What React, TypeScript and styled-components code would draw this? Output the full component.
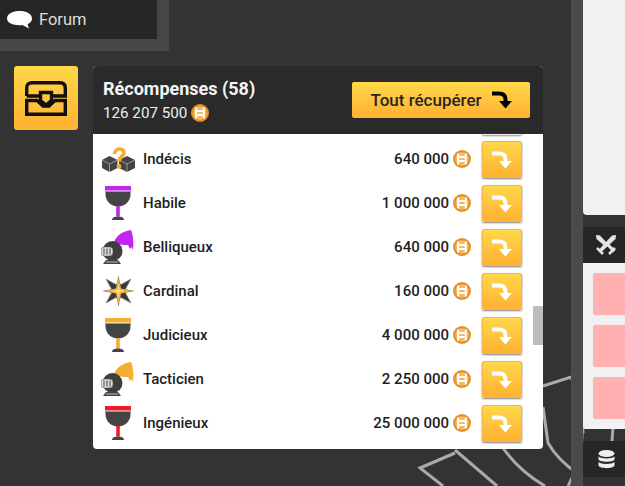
import React from "react";
import styled, { createGlobalStyle } from "styled-components";

const Global = createGlobalStyle`
  html, body { margin: 0; padding: 0; width: 625px; height: 486px; overflow: hidden; background: #333; }
  * { box-sizing: border-box; }
  body { font-family: Roboto, "Liberation Sans", sans-serif; }
`;
const Page = styled.div`
  position: relative; width: 625px; height: 486px; overflow: hidden; background: #333;
  display: grid; grid-template-columns: 571px 12px 42px;
`;
const Decor = styled.svg`position: absolute; left: 0; top: 0; pointer-events: none; z-index: 0;`;
const Main = styled.div`position: relative; z-index: 1; display: flex; flex-direction: column; align-items: flex-start;`;
const ForumFrame = styled.div`
  width: 169px; height: 51px; background: #464646; padding: 0 12px 12px 0;
`;
const Forum = styled.div`
  width: 157px; height: 39px; background: #262626; display: flex; align-items: center;
  padding: 0 0 0 7px; gap: 7px; color: #dedede; font-size: 16.5px;
`;
const Row0 = styled.div`display: flex; align-items: flex-start; margin: 15px 0 0 14px; gap: 15px;`;
const Chest = styled.div`
  width: 64px; height: 64px; border-radius: 3px; background: linear-gradient(#ffd84a, #ffb132);
  display: flex; align-items: center; justify-content: center;
`;
const Panel = styled.div`
  position: relative; width: 450px; height: 383px; border-radius: 4px; overflow: hidden;
  display: flex; flex-direction: column; background: #fff;
`;
const Head = styled.div`
  height: 68px; flex: none; background: #2a2a2a; display: flex; align-items: center;
  justify-content: space-between; padding: 0 13px 0 10px; color: #fff;
`;
const Title = styled.div`font-size: 18px; font-weight: 700; line-height: 22px; color: #f4f4f4; margin-top: 1px;`;
const Sum = styled.div`display: flex; align-items: center; gap: 4px; font-size: 15.2px; line-height: 20px; color: #eee; margin-top: 3px;`;
const AllBtn = styled.button`
  width: 178px; height: 36px; border: 0; border-radius: 2px; background: linear-gradient(#ffd84a, #ffb132);
  color: #262626; font: 500 17px Roboto, sans-serif; display: flex; align-items: center; justify-content: center;
  gap: 10px; padding: 0; margin-top: -1px;
`;
const List = styled.div`flex: 1; overflow: hidden; position: relative; padding-top: 7px;`;
const Stub = styled.div`
  position: absolute; left: 389px; top: -37px; width: 40px; height: 38px; background: #f2f2f2;
  border-radius: 2px; box-shadow: 0 1px 2px rgba(0,0,0,.45);
`;
const Item = styled.div`
  height: 44px; display: flex; align-items: center; padding: 0 21px 8px 8px;
`;
const IconBox = styled.div`width: 34px; height: 36px; display: flex; align-items: center; justify-content: center; flex: none;`;
const Name = styled.div`margin-left: 8px; font-size: 15px; font-weight: 500; color: #1e1e1e; flex: 1;`;
const Amount = styled.div`font-size: 15px; font-weight: 500; color: #1e1e1e; margin-right: 4px;`;
const Claim = styled.button`
  width: 40px; height: 37px; margin-left: 11px; border: 1px solid #f5b548; border-radius: 2px; padding: 0;
  align-self: flex-start;
  background: linear-gradient(#ffd84a, #ffb132); box-shadow: 0 1px 2px rgba(0,0,0,.5);
  display: flex; align-items: center; justify-content: center;
`;
const Thumb = styled.div`position: absolute; left: 440px; top: 240px; width: 10px; height: 39px; background: #bdbdbd;`;
const Gutter = styled.div`position: relative; z-index: 0; background: #4a4a4a;`;
const Side = styled.div`position: relative; z-index: 1; display: flex; flex-direction: column; width: 42px;`;
const TopCard = styled.div`height: 215px; background: #f1f1f1; border-bottom-left-radius: 4px;`;
const SideHead = styled.div`
  margin-top: 12px; height: 36px; background: #262626; border-top-left-radius: 4px;
  display: flex; align-items: center; padding-left: 13px;
`;
const SideBody = styled.div`
  height: 166px; background: #f1f1f1; padding: 10px 0 0 10px; display: flex; flex-direction: column; gap: 10px;
  border-bottom-left-radius: 2px;
`;
const Pink = styled.div`height: 42px; background: #ffb0b0; border-radius: 2px 0 0 2px;`;
const DbBox = styled.div`
  margin-top: 12px; height: 36px; background: #262626; border-top-left-radius: 4px; padding: 9px 0 0 15px;
`;

const Coin = () => (
  <svg width="18" height="18" viewBox="0 0 18 18" style={{ flex: "none" }}>
    <circle cx="9" cy="9" r="9" fill="#e2902a" />
    <circle cx="9" cy="9" r="6.800" fill="#f5b85e" />
    <path d="M5.200 3.500v11M12.800 3.500v11M5.200 7h7.600M5.200 11h7.600" stroke="#fff" strokeWidth="2" fill="none" />
  </svg>
);
const Arrow = ({ color }: { color: string }) => (
  <svg width="20" height="18" viewBox="0 0 20 18">
    <path d="M0 2.500h7c4 0 6.500 2 6.500 6v3" stroke={color} strokeWidth="4" fill="none" />
    <path d="M7 10h13l-6.500 7.500z" fill={color} />
  </svg>
);
const Goblet = ({ c }: { c: string }) => (
  <svg width="26" height="34" viewBox="0 0 26 34">
    <rect x="0" y="0" width="26" height="4.500" fill={c} />
    <path d="M0 5.500h26" stroke="#999" strokeWidth="1" />
    <path d="M.5 6h25v2.500C25.500 15 20 20.500 13 20.500S.5 15 .5 8.500z" fill="#444" />
    <rect x="11.200" y="20" width="3.600" height="10.500" fill={c} />
    <path d="M7 34c0-2.500 2.500-3.500 6-3.500s6 1 6 3.500z" fill="#444" />
  </svg>
);
const Helmet = ({ c }: { c: string }) => (
  <svg width="33" height="35" viewBox="0 0 33 35" style={{ marginLeft: -1 }}>
    <path d="M13 12C16 4 23 1 30 0c2 5 3 12 2 20l-1.500-3-1.500 2-2-4c-5 0-10-.5-14-3z" fill={c} />
    <circle cx="11.500" cy="21" r="10" fill="#3e3e3e" />
    <rect x="0" y="17" width="12" height="9" rx="3.500" fill="#ddd" stroke="#555" strokeWidth=".6" />
    <path d="M3 18.500v6M6 18.500v6M9 18.500v6" stroke="#444" strokeWidth="1" />
    <path d="M2 34l3-4h12l3 4z" fill="#444" />
    <path d="M5 32h12" stroke="#bbb" strokeWidth="1" />
  </svg>
);
const Star = () => (
  <svg width="33" height="32" viewBox="0 0 33 32">
    <path d="M4 4l10 5.500 2.500-2 2.500 2L29 4l-5.500 10 2 2-2 2L29 28l-10-5.500-2.500 2-2.500-2L4 28l5.500-10-2-2 2-2z" fill="#3a3a3a" stroke="#888" strokeWidth=".7" />
    <path d="M16.500 0l2.500 13.500L33 16l-14 2.500L16.500 32 14 18.500 0 16l14-2.500z" fill="#777" />
    <path d="M16.500 3l2.500 10.500L30 16l-11 2.500L16.500 29 14 18.500 3 16l11-2.500z" fill="#f6ad33" />
    <path d="M16.500 8l1 7 6 1-6 1-1 7-1-7-6-1 6-1z" fill="#fbe09a" />
  </svg>
);
const Dice = () => (
  <svg width="34" height="25" viewBox="0 0 34 25">
    <path d="M1 13l7.500-4 8 4v8l-8 4-7.500-4z" fill="#444" />
    <path d="M1 13l7.500 4 8-4M8.500 17v8" stroke="#bbb" strokeWidth=".7" fill="none" />
    <path d="M18 13l8-4 8 4v8l-8 4-8-4z" fill="#444" />
    <path d="M18 13l8 4 8-4M26 17v8" stroke="#bbb" strokeWidth=".7" fill="none" />
    <path d="M13.500 7c0-6 9.500-6.500 9.500-1.500 0 4-5 4-5 9" stroke="#f6ad33" strokeWidth="3.800" fill="none" />
    <rect x="15.800" y="17" width="4.400" height="4.400" rx="1.500" fill="#f6ad33" />
  </svg>
);

const rows: [string, string, React.ReactNode][] = [
  ["Indécis", "640 000", <Dice />],
  ["Habile", "1 000 000", <Goblet c="#c026f0" />],
  ["Belliqueux", "640 000", <Helmet c="#c026f0" />],
  ["Cardinal", "160 000", <Star />],
  ["Judicieux", "4 000 000", <Goblet c="#f6ad33" />],
  ["Tacticien", "2 250 000", <Helmet c="#f6ad33" />],
  ["Ingénieux", "25 000 000", <Goblet c="#f01c28" />],
];

export default function App() {
  return (
    <>
      <Global />
      <Page>
        <Decor width="625" height="486" viewBox="0 0 625 486" fill="none" stroke="#aaa" strokeWidth="3">
          <path d="M543 386l28-9c8 18 12 36 12 56" />
          <path d="M575 394h8" />
          <path d="M576 394c10 28 8 64-8 92" />
          <path d="M543 407l5 36c7 12 17 22 29 30" />
          <path d="M503 448c10 14 25 28 42 38" />
          <path d="M455 453l-35 15 23 18" />
          <path d="M455 450l42 36" />
          <path d="M613 428l-1 13" />
        </Decor>
        <Main>
          <ForumFrame>
            <Forum>
              <svg width="25" height="18" viewBox="0 0 25 18">
                <path d="M12.500 0C19 0 25 2.500 25 7.500c0 2.800-2 4.700-4.500 5.700l1.500 4.300-6.500-3.500C8 14.800 0 12.800 0 7.500 0 2.500 6 0 12.500 0z" fill="#fff" />
              </svg>
              Forum
            </Forum>
          </ForumFrame>
          <Row0>
            <Chest>
              <svg width="42" height="35" viewBox="0 0 42 35" fill="none" stroke="#111" strokeWidth="3.400">
                <path d="M1.700 15V7c0-3.500 2-5.300 5.300-5.300h28c3.500 0 5.300 1.800 5.300 5.300v8H27M15 15H1.700" />
                <path d="M1.700 19.500v13.800h38.600V19.500H30l-6 5.500h-6l-6-5.500z" />
                <path d="M15.500 11.500h11v8L21 24l-5.500-4.500z" />
              </svg>
            </Chest>
            <Panel>
              <Head>
                <div>
                  <Title>Récompenses (58)</Title>
                  <Sum>126 207 500 <Coin /></Sum>
                </div>
                <AllBtn>Tout récupérer <Arrow color="#000" /></AllBtn>
              </Head>
              <List>
                <Stub />
                {rows.map(([n, a, i]) => (
                  <Item key={n}>
                    <IconBox>{i}</IconBox>
                    <Name>{n}</Name>
                    <Amount>{a}</Amount>
                    <Coin />
                    <Claim><Arrow color="#fff" /></Claim>
                  </Item>
                ))}
              </List>
              <Thumb />
            </Panel>
          </Row0>
        </Main>
        <Gutter />
        <Side>
          <TopCard />
          <SideHead>
            <svg width="20" height="20" viewBox="0 0 20 20" fill="#e4e4e4" stroke="#e4e4e4">
              <path d="M0 0l4 .5 6.500 7-2.500 3-7.500-6.500z" stroke="none" />
              <path d="M20 0l-4 .5L3.500 14l2.500 2.500L19.500 4z" stroke="none" />
              <path d="M10 10l2-2 7.500 7-2.500 2.500z" stroke="none" />
              <path d="M1 13l6 6M19 13l-6 6" fill="none" strokeWidth="2.500" />
            </svg>
          </SideHead>
          <SideBody>
            <Pink /><Pink /><Pink />
          </SideBody>
          <DbBox>
            <svg width="17" height="19" viewBox="0 0 17 19" fill="#eee">
              <ellipse cx="8.500" cy="3.500" rx="8" ry="3.500" />
              <path d="M.5 6.500c2 2.500 14 2.500 16 0v3c-1 3-15 3-16 0zM.5 12c2 2.500 14 2.500 16 0v3.500c-1 3.500-15 3.500-16 0z" />
            </svg>
          </DbBox>
        </Side>
      </Page>
    </>
  );
}
